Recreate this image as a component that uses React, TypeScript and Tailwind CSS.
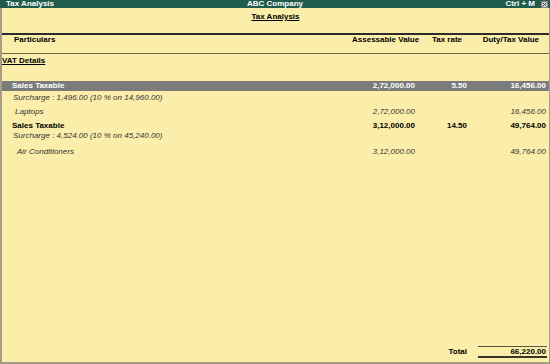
const FONT = { fontFamily: '"Liberation Sans", Arial, sans-serif' };

type Row = {
  label: string;
  indent: string;
  kind: "hl" | "bold" | "note" | "item";
  gap: string;
  assess?: string;
  rate?: string;
  duty?: string;
};

const ROWS: Row[] = [
  { label: "Sales Taxable", indent: "pl-[10px]", kind: "hl", gap: "mt-[16px]", assess: "2,72,000.00", rate: "5.50", duty: "16,456.00" },
  { label: "Surcharge : 1,496.00 (10 % on 14,960.00)", indent: "pl-[11px]", kind: "note", gap: "mt-[3px]" },
  { label: "Laptops", indent: "pl-[13px]", kind: "item", gap: "mt-[6px]", assess: "2,72,000.00", duty: "16,456.00" },
  { label: "Sales Taxable", indent: "pl-[10px]", kind: "bold", gap: "mt-[6px]", assess: "3,12,000.00", rate: "14.50", duty: "49,764.00" },
  { label: "Surcharge : 4,524.00 (10 % on 45,240.00)", indent: "pl-[11px]", kind: "note", gap: "mt-[2px]" },
  { label: "Air Conditioners", indent: "pl-[15px]", kind: "item", gap: "mt-[8px]", assess: "3,12,000.00", duty: "49,764.00" },
];

function rowClass(kind: Row["kind"]) {
  if (kind === "hl") return "h-[10px] leading-[10px] bg-[#7b7b7b] text-white font-bold";
  if (kind === "bold") return "leading-[8px] text-black font-bold";
  return "leading-[8px] text-[#333333] italic";
}

export default function App() {
  return (
    <div className="w-[550px] h-[364px] flex flex-col text-[8px] bg-[#fbeeab]" style={FONT}>
      {/* title bar */}
      <div className="h-[8px] leading-[8px] bg-[#1f5c4c] text-white font-bold grid grid-cols-3">
        <span className="pl-[6px]">Tax Analysis</span>
        <span className="text-center">ABC Company</span>
        <div className="flex justify-end items-center gap-[6px] pr-[2px]">
          <span>Ctrl + M</span>
          <span className="w-[7px] h-[7px] bg-[#d8d8d8] border border-[#888] flex items-center justify-center">
            <svg width="5" height="5" viewBox="0 0 5 5">
              <path d="M0.5 0.5L4.5 4.5M4.5 0.5L0.5 4.5" stroke="#444" strokeWidth="1" />
            </svg>
          </span>
        </div>
      </div>

      <div className="flex-1 flex flex-col border-l-2 border-r border-b-2 border-[#a39d8a]">
        <div className="pt-[5px] text-center leading-[8px] font-bold text-black">
          <span className="underline underline-offset-1">Tax Analysis</span>
        </div>

        {/* column headings */}
        <div className="mt-[12px] border-t-2 border-b border-t-[#2b2b2b] border-b-[#6f6646] pt-[1px] pb-[9px] flex leading-[8px] font-bold text-black">
          <div className="flex-1 pl-[12px]">Particulars</div>
          <div className="w-[68px] text-right pr-[1px] whitespace-nowrap">Assessable Value</div>
          <div className="w-[50px] text-right pr-[8px]">Tax rate</div>
          <div className="w-[79px] text-right pr-[10px] whitespace-nowrap">Duty/Tax Value</div>
        </div>

        <div className="mt-[3px] leading-[8px] font-bold text-black">
          <span className="underline underline-offset-1">VAT Details</span>
        </div>

        {ROWS.map((r, i) => (
          <div key={i} className={`flex items-center ${r.gap} ${rowClass(r.kind)}`}>
            <div className={`flex-1 whitespace-nowrap ${r.indent}`}>{r.label}</div>
            <div className="w-[68px] text-right pr-[5px]">{r.assess}</div>
            <div className="w-[50px] text-right pr-[3px]">{r.rate}</div>
            <div className="w-[79px] text-right pr-[3px]">{r.duty}</div>
          </div>
        ))}

        {/* total */}
        <div className="mt-auto mb-[4px] flex justify-end items-center font-bold text-black leading-[8px]">
          <span className="pr-[11px]">Total</span>
          <div className="w-[69px] mr-[2px] border-t border-b-2 border-t-[#5a5440] border-b-[#3a3628] pt-[1px] text-right pr-[1px]">
            66,220.00
          </div>
        </div>
      </div>
    </div>
  );
}
